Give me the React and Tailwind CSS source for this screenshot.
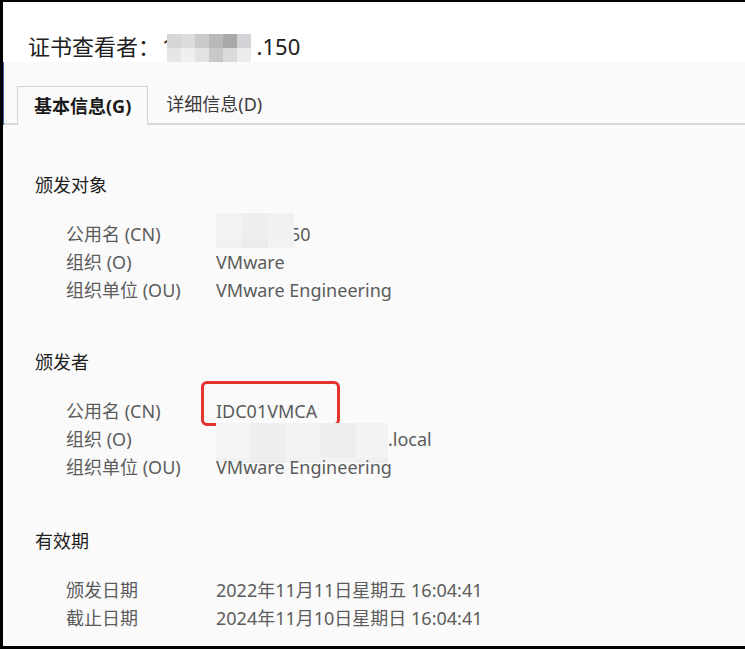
const font = { fontFamily: '"Noto Sans", "Noto Sans CJK SC", sans-serif' };

const Mosaic = ({ cells, cols, size, className }) => (
  <div
    className={`grid ${className}`}
    style={{ gridTemplateColumns: `repeat(${cols}, ${size}px)`, gridAutoRows: `${size}px` }}
  >
    {cells.map((c, i) => (
      <div key={i} style={{ background: c }} />
    ))}
  </div>
);

const Row = ({ label, children }) => (
  <div className="flex h-[28px] items-center">
    <div className="w-[150px] shrink-0">{label}</div>
    <div className="relative">{children}</div>
  </div>
);

const Section = ({ title, className, children }) => (
  <div className={className}>
    <div className="h-[28px] leading-[28px] text-[#1e1e1e]">{title}</div>
    <div className="mt-[21px] pl-[31px] text-[#5c5c5c]">{children}</div>
  </div>
);

export default function App() {
  return (
    <div
      className="w-[745px] h-[649px] flex flex-col bg-[#fafafa] border-t-2 border-l-[3px] border-b-[3px] border-black overflow-hidden text-[18px]"
      style={font}
    >
      {/* title */}
      <div className="h-[60px] bg-white pl-[25px] pt-[29px]">
        <div className="flex items-center h-[30px] leading-[30px] text-[22px] text-[#202020]">
          <span>证书查看者：</span>
          <span className="relative ml-[2px]">
            1
            <Mosaic
              cols={6}
              size={14}
              className="absolute left-[5px] top-[3px]"
              cells={['#d6d6d6', '#dcdcdc', '#cbcbcb', '#b9b9b9', '#a9a9a9', '#d2d4d8', '#e6e6e6', '#efefef', '#e3e3e3', '#c8c8c8', '#dadada', '#ececec']}
            />
          </span>
          <span className="ml-[82px]">.150</span>
        </div>
      </div>

      {/* tabs */}
      <div className="pt-[24px] border-l border-[#3e63a8]">
        <div className="flex pl-[13px] border-b-2 border-[#d8d8d8] h-[39px]">
          <div className="h-[39px] mb-[-2px] px-[16px] flex items-center border border-b-0 border-[#d4d4d4] bg-[#fafafa] font-bold text-[#1a1a1a]">
            基本信息(G)
          </div>
          <div className="h-[37px] px-[18px] flex items-center text-[#3a3a3a]">详细信息(D)</div>
        </div>
      </div>

      {/* content */}
      <div className="pl-[32px] pt-[46px]">
        <Section title="颁发对象">
          <Row label="公用名 (CN)">
            <span className="pl-[74px]">50</span>
            <Mosaic
              cols={3}
              size={26}
              className="absolute left-0 top-[-8px] h-[35px] overflow-hidden"
              cells={['#f3f3f3', '#eeeeee', '#f1f1f1', '#f0f0f0', '#ebebeb', '#f2f2f2']}
            />
          </Row>
          <Row label="组织 (O)">VMware</Row>
          <Row label="组织单位 (OU)">VMware Engineering</Row>
        </Section>

        <Section title="颁发者" className="mt-[44px]">
          <Row label="公用名 (CN)">
            IDC01VMCA
            <div className="absolute left-[-15px] top-[-17px] w-[139px] h-[45px] border-[3px] border-[#e4332c] rounded-[6px]" />
          </Row>
          <Row label="组织 (O)">
            <span className="pl-[172px]">.local</span>
            <Mosaic
              cols={5}
              size={35}
              className="absolute left-0 top-[-3px] w-[172px] h-[40px] overflow-hidden"
              cells={['#f4f4f4', '#efefef', '#f2f2f2', '#eeeeee', '#f3f3f3', '#f1f1f1', '#ececec', '#f0f0f0', '#f3f3f3', '#efefef']}
            />
          </Row>
          <Row label="组织单位 (OU)">VMware Engineering</Row>
        </Section>

        <Section title="有效期" className="mt-[46px]">
          <Row label="颁发日期">2022年11月11日星期五 16:04:41</Row>
          <Row label="截止日期">2024年11月10日星期日 16:04:41</Row>
        </Section>
      </div>
    </div>
  );
}
